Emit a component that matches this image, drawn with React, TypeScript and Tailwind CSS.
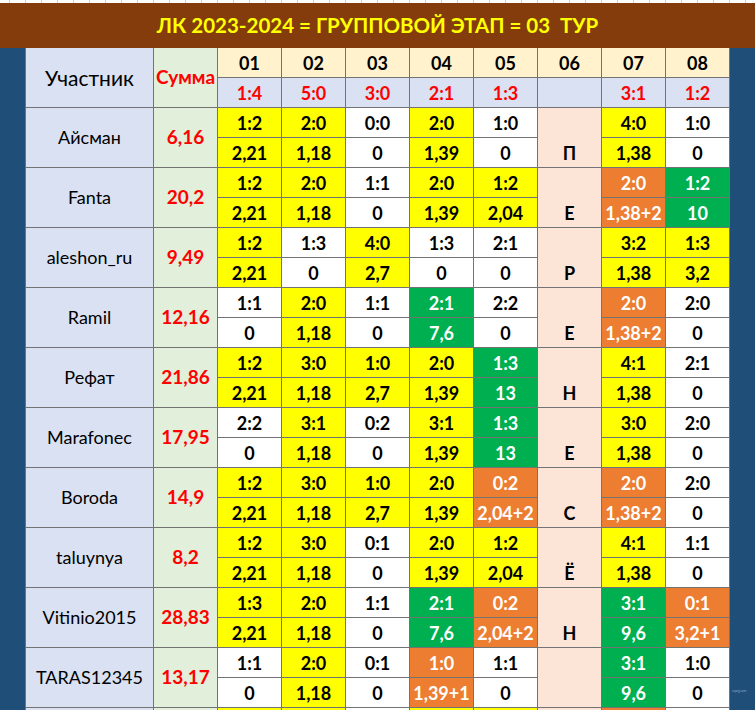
import React from "react";

type Tone = "y" | "w" | "g" | "o";
type Game = [string, string, Tone];

type Player = {
  name: string;
  sum: string;
  letter: string;
  games: Game[]; // 7 games: 01-05, 07, 08
};

const SCORES = ["1:4", "5:0", "3:0", "2:1", "1:3", "", "3:1", "1:2"];

const PLAYERS: Player[] = [
  {
    name: "Айсман", sum: "6,16", letter: "П",
    games: [["1:2", "2,21", "y"], ["2:0", "1,18", "y"], ["0:0", "0", "w"], ["2:0", "1,39", "y"], ["1:0", "0", "w"], ["4:0", "1,38", "y"], ["1:0", "0", "w"]],
  },
  {
    name: "Fanta", sum: "20,2", letter: "Е",
    games: [["1:2", "2,21", "y"], ["2:0", "1,18", "y"], ["1:1", "0", "w"], ["2:0", "1,39", "y"], ["1:2", "2,04", "y"], ["2:0", "1,38+2", "o"], ["1:2", "10", "g"]],
  },
  {
    name: "aleshon_ru", sum: "9,49", letter: "Р",
    games: [["1:2", "2,21", "y"], ["1:3", "0", "w"], ["4:0", "2,7", "y"], ["1:3", "0", "w"], ["2:1", "0", "w"], ["3:2", "1,38", "y"], ["1:3", "3,2", "y"]],
  },
  {
    name: "Ramil", sum: "12,16", letter: "Е",
    games: [["1:1", "0", "w"], ["2:0", "1,18", "y"], ["1:1", "0", "w"], ["2:1", "7,6", "g"], ["2:2", "0", "w"], ["2:0", "1,38+2", "o"], ["2:0", "0", "w"]],
  },
  {
    name: "Рефат", sum: "21,86", letter: "Н",
    games: [["1:2", "2,21", "y"], ["3:0", "1,18", "y"], ["1:0", "2,7", "y"], ["2:0", "1,39", "y"], ["1:3", "13", "g"], ["4:1", "1,38", "y"], ["2:1", "0", "w"]],
  },
  {
    name: "Marafonec", sum: "17,95", letter: "Е",
    games: [["2:2", "0", "w"], ["3:1", "1,18", "y"], ["0:2", "0", "w"], ["3:1", "1,39", "y"], ["1:3", "13", "g"], ["3:0", "1,38", "y"], ["2:0", "0", "w"]],
  },
  {
    name: "Boroda", sum: "14,9", letter: "С",
    games: [["1:2", "2,21", "y"], ["3:0", "1,18", "y"], ["1:0", "2,7", "y"], ["2:0", "1,39", "y"], ["0:2", "2,04+2", "o"], ["2:0", "1,38+2", "o"], ["2:0", "0", "w"]],
  },
  {
    name: "taluynya", sum: "8,2", letter: "Ё",
    games: [["1:2", "2,21", "y"], ["3:0", "1,18", "y"], ["0:1", "0", "w"], ["2:0", "1,39", "y"], ["1:2", "2,04", "y"], ["4:1", "1,38", "y"], ["1:1", "0", "w"]],
  },
  {
    name: "Vitinio2015", sum: "28,83", letter: "Н",
    games: [["1:3", "2,21", "y"], ["2:0", "1,18", "y"], ["1:1", "0", "w"], ["2:1", "7,6", "g"], ["0:2", "2,04+2", "o"], ["3:1", "9,6", "g"], ["0:1", "3,2+1", "o"]],
  },
  {
    name: "TARAS12345", sum: "13,17", letter: "",
    games: [["1:1", "0", "w"], ["2:0", "1,18", "y"], ["0:1", "0", "w"], ["1:0", "1,39+1", "o"], ["1:1", "0", "w"], ["3:1", "9,6", "g"], ["1:0", "0", "w"]],
  },
  {
    name: "", sum: "", letter: "",
    games: [["", "", "y"], ["", "", "y"], ["", "", "w"], ["", "", "y"], ["", "", "y"], ["", "", "o"], ["", "", "w"]],
  },
];

const toneClass: Record<Tone, string> = {
  y: "bg-[#ffff00] text-black",
  w: "bg-white text-black",
  g: "bg-[#00b050] text-white",
  o: "bg-[#ed7d31] text-white",
};

const cell = "flex items-center justify-center border-r border-b border-[#737373] font-bold text-[18px] leading-none";

function PlayerRows({ p }: { p: Player }) {
  const first = p.games.slice(0, 5);
  const last = p.games.slice(5);
  return (
    <>
      <div className="row-span-2 flex items-center justify-center border-r border-b border-[#737373] bg-[#d9e1f2] text-[18px] text-black">
        {p.name}
      </div>
      <div className="row-span-2 flex items-center justify-center border-r border-b border-[#737373] bg-[#e2efda] text-[19px] font-bold text-[#ff0000]">
        {p.sum}
      </div>
      {first.map((g, i) => (
        <div key={`t${i}`} className={`${cell} ${toneClass[g[2]]}`}>{g[0]}</div>
      ))}
      <div className="row-span-2 flex flex-col border-r border-b border-[#737373] bg-[#fce4d6]">
        <div className="h-[30px]" />
        <div className="flex flex-1 items-center justify-center text-[18px] font-bold leading-none text-black">{p.letter}</div>
      </div>
      {last.map((g, i) => (
        <div key={`t2${i}`} className={`${cell} ${toneClass[g[2]]}`}>{g[0]}</div>
      ))}
      {first.map((g, i) => (
        <div key={`b${i}`} className={`${cell} ${toneClass[g[2]]}`}>{g[1]}</div>
      ))}
      {last.map((g, i) => (
        <div key={`b2${i}`} className={`${cell} ${toneClass[g[2]]}`}>{g[1]}</div>
      ))}
    </>
  );
}

export default function App() {
  return (
    <div className="h-[710px] w-[755px] overflow-hidden bg-[#1f4e79] font-['Lato','Noto_Sans',sans-serif]">
      <div className="flex h-[3px] bg-white pl-[9px]">
        {Array.from({ length: 47 }).map((_, i) => (
          <div key={i} className="h-full w-[16px] shrink-0 border-l border-[#d0d0d0]" />
        ))}
      </div>
      <div className="flex h-[45px] items-center justify-center bg-[#843c0c]">
        <span className="whitespace-pre text-[20.5px] font-bold text-[#ffff00]">ЛК 2023-2024 = ГРУППОВОЙ ЭТАП = 03  ТУР</span>
      </div>
      <div className="relative flex">
        <div className="w-[25px] shrink-0" />
        <div className="grid grid-cols-[128px_64px_repeat(8,64px)] auto-rows-[30px] border-l border-[#737373]">
          <div className="row-span-2 flex items-center justify-center border-r border-b border-[#737373] bg-[#d9e1f2] text-[21px] text-black">
            Участник
          </div>
          <div className="row-span-2 flex items-center justify-center border-r border-b border-[#737373] bg-[#e2efda] text-[19px] font-bold text-[#ff0000]">
            Сумма
          </div>
          {["01", "02", "03", "04", "05", "06", "07", "08"].map((n) => (
            <div key={n} className={`${cell} bg-[#fff2cc] text-black`}>{n}</div>
          ))}
          {SCORES.map((s, i) => (
            <div key={i} className={`${cell} bg-[#d9e1f2] text-[#ff0000]`}>{s}</div>
          ))}
          {PLAYERS.map((p, i) => (
            <PlayerRows key={i} p={p} />
          ))}
        </div>
        <span className="absolute left-[732px] top-[642px] text-[3px] leading-none text-[#8fa9c8]">ezpng.com</span>
      </div>
    </div>
  );
}
